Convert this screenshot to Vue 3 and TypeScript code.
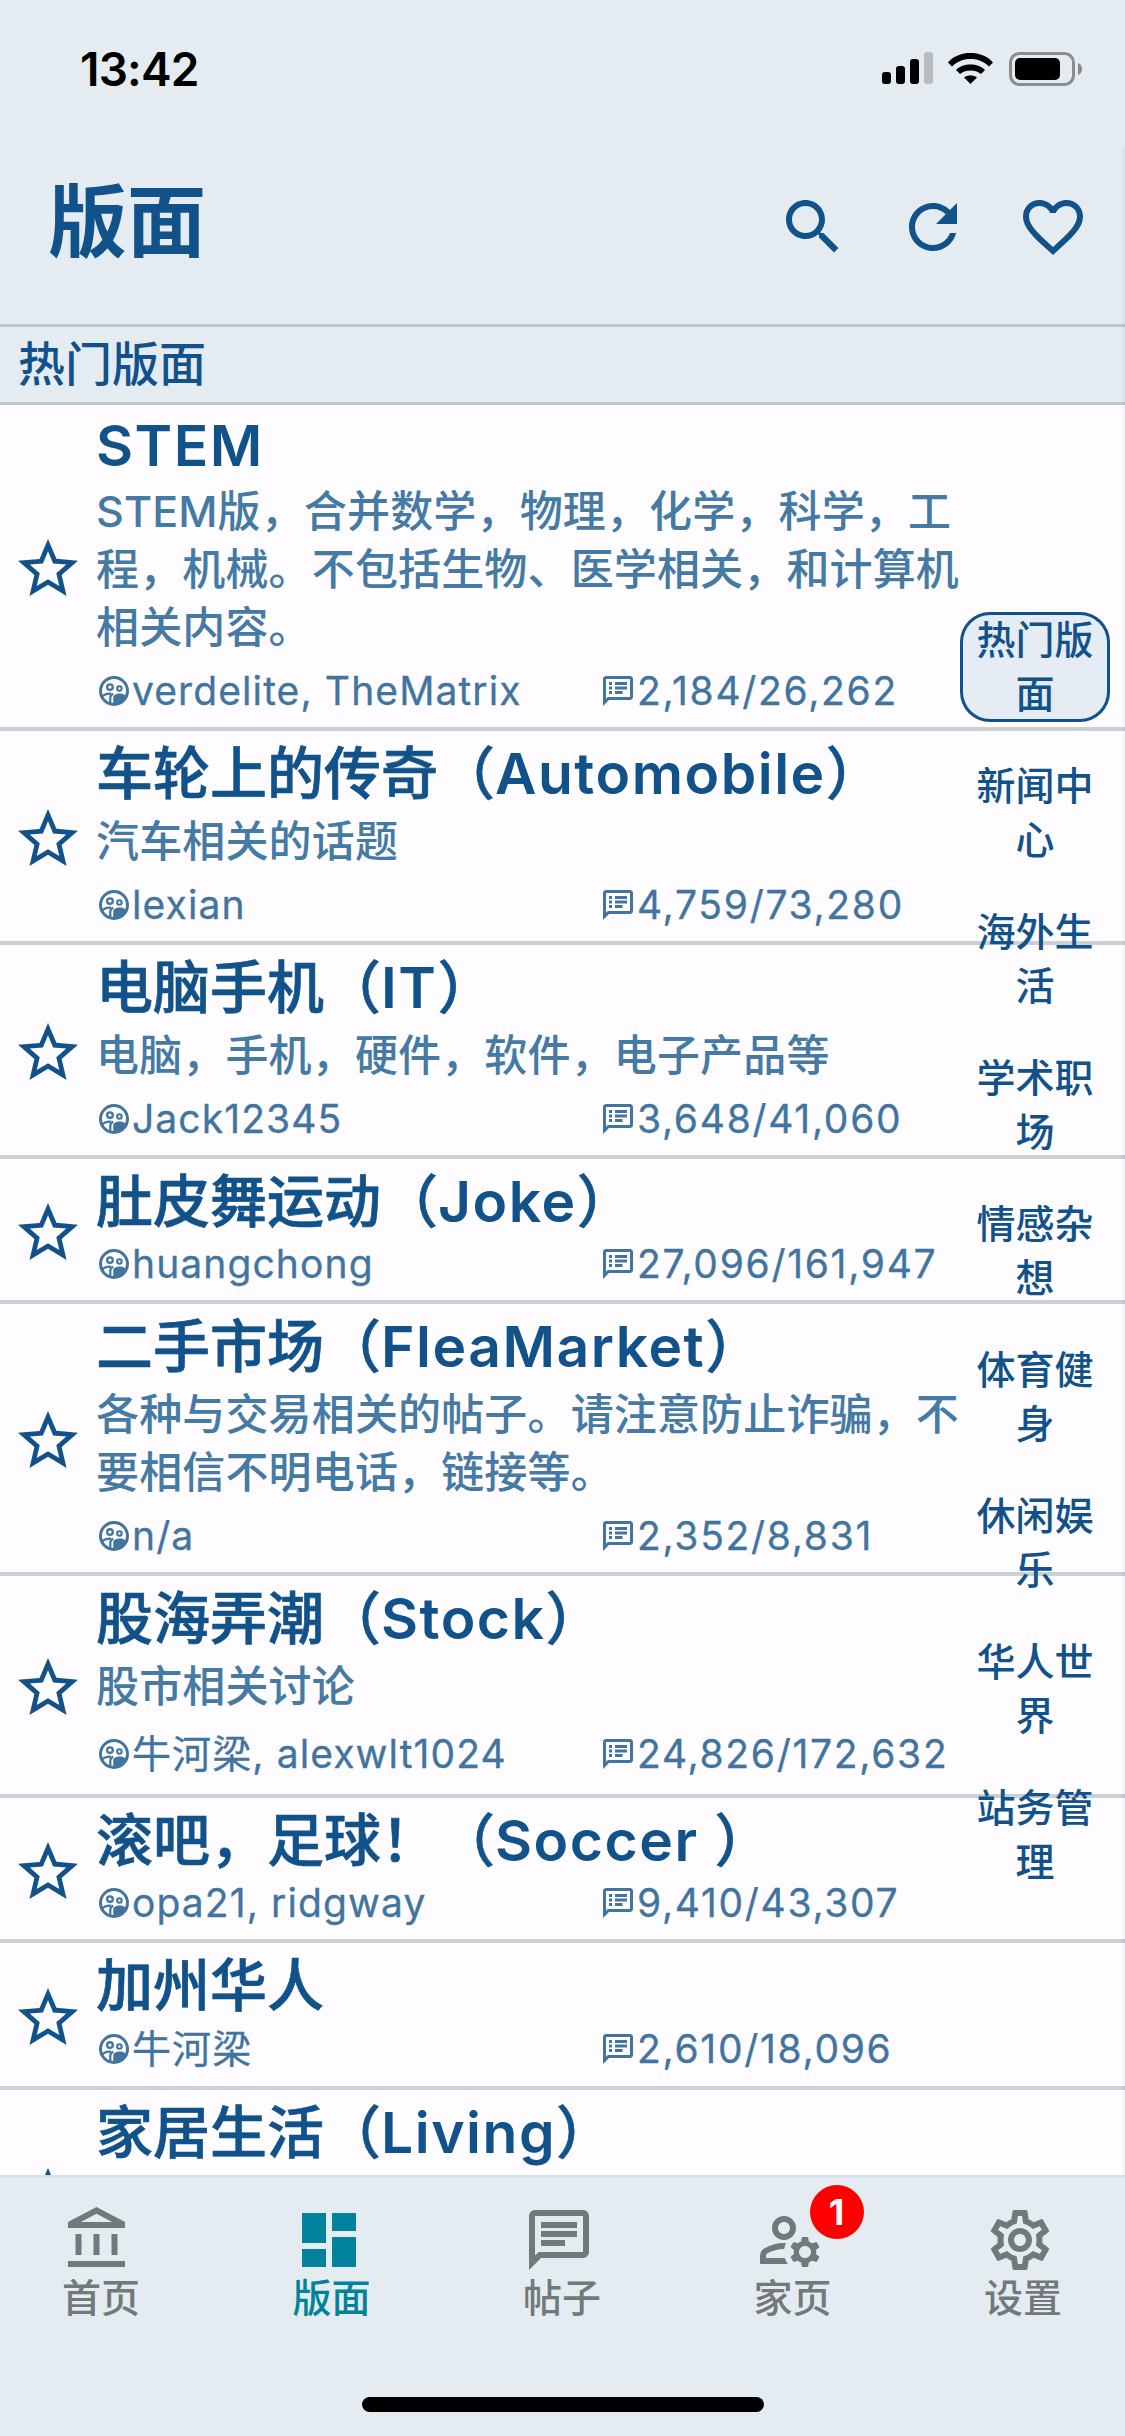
<script setup lang="ts">
interface Board {
  title: string
  desc?: string
  author: string
  stats: string
  latin?: boolean
  cjkAuthor?: boolean
}

interface Segment {
  text: string
  cjk: boolean
}

const boards: Board[] = [
  { title: 'STEM', latin: true, desc: 'STEM版，合并数学，物理，化学，科学，工程，机械。不包括生物、医学相关，和计算机相关内容。', author: 'verdelite, TheMatrix', stats: '2,184/26,262' },
  { title: '车轮上的传奇（Automobile）', desc: '汽车相关的话题', author: 'lexian', stats: '4,759/73,280' },
  { title: '电脑手机（IT）', desc: '电脑，手机，硬件，软件，电子产品等', author: 'Jack12345', stats: '3,648/41,060' },
  { title: '肚皮舞运动（Joke）', author: 'huangchong', stats: '27,096/161,947' },
  { title: '二手市场（FleaMarket）', desc: '各种与交易相关的帖子。请注意防止诈骗，不要相信不明电话，链接等。', author: 'n/a', stats: '2,352/8,831' },
  { title: '股海弄潮（Stock）', desc: '股市相关讨论', author: '牛河梁, alexwlt1024', stats: '24,826/172,632', cjkAuthor: true },
  { title: '滚吧，足球！（Soccer ）', author: 'opa21, ridgway', stats: '9,410/43,307' },
  { title: '加州华人', author: '牛河梁', stats: '2,610/18,096', cjkAuthor: true },
  { title: '家居生活（Living）', desc: '家居生活相关', author: 'n/a', stats: '1,024/9,380' },
]

const categories = ['热门版面', '新闻中心', '海外生活', '学术职场', '情感杂想', '体育健身', '休闲娱乐', '华人世界', '站务管理']

// CJK and Latin runs of a title take different weights
function segments(title: string): Segment[] {
  const runs = title.match(/[\u3000-\u9fff\uff00-\uffef]+|[^\u3000-\u9fff\uff00-\uffef]+/g) ?? []
  return runs.map((text) => ({ text, cjk: /[\u3000-\u9fff\uff00-\uffef]/.test(text) }))
}
</script>

<template>
  <div class="screen">
    <header class="header">
      <div class="status">
        <span class="time">13:42</span>
        <svg class="status-icons" width="200" height="36" viewBox="0 0 200 36">
          <rect x="0" y="20" width="9" height="12" rx="3" fill="#000" />
          <rect x="14" y="14" width="9" height="18" rx="3" fill="#000" />
          <rect x="28" y="7" width="9" height="25" rx="3" fill="#000" />
          <rect x="42" y="0" width="9" height="32" rx="3" fill="#b8bcbf" />
          <path d="M66 10.500C72 3.500 80 1 88.500 1S105 3.500 111 10.500L107 14.500C102 9.500 96 7 88.500 7S75 9.500 70 14.500Z" fill="#000" />
          <path d="M74 18C78 14 83 12.500 88.500 12.500S99 14 103 18L99 22C96 19.500 92.500 18.500 88.500 18.500S81 19.500 78 22Z" fill="#000" />
          <path d="M82 25.500C84 24 86 23.500 88.500 23.500S93 24 95 25.500L88.500 32Z" fill="#000" />
          <rect x="128.500" y="1.500" width="63" height="31" rx="9" fill="none" stroke="#8a8d90" stroke-width="3" />
          <rect x="133" y="6" width="45" height="22" rx="5" fill="#000" />
          <path d="M196 11C198.500 12 200 14 200 17S198.500 22 196 23Z" fill="#85888b" />
        </svg>
      </div>
      <div class="title-row">
        <h1 class="page-title">版面</h1>
        <div class="actions">
          <svg class="icon-72" viewBox="0 0 24 24"><path d="M15.500 14h-.79l-.28-.27C15.410 12.590 16 11.110 16 9.500 16 5.910 13.090 3 9.500 3S3 5.910 3 9.500 5.910 16 9.500 16c1.610 0 3.090-.59 4.230-1.570l.27.28v.79l5 4.990L20.490 19l-4.990-5zm-6 0C7.010 14 5 11.990 5 9.500S7.010 5 9.500 5 14 7.010 14 9.500 11.990 14 9.500 14z" /></svg>
          <svg class="icon-72" viewBox="0 0 24 24"><path d="M17.650 6.350C16.200 4.900 14.210 4 12 4c-4.420 0-7.990 3.580-7.990 8s3.570 8 7.990 8c3.730 0 6.840-2.550 7.730-6h-2.080c-.82 2.330-3.040 4-5.650 4-3.310 0-6-2.690-6-6s2.690-6 6-6c1.660 0 3.140.69 4.220 1.780L13 11h7V4l-2.350 2.350z" /></svg>
          <svg class="icon-72" viewBox="0 0 24 24"><path d="M16.500 3c-1.740 0-3.410.81-4.500 2.090C10.910 3.810 9.240 3 7.500 3 4.420 3 2 5.420 2 8.500c0 3.780 3.400 6.860 8.550 11.540L12 21.350l1.450-1.320C18.600 15.360 22 12.280 22 8.500 22 5.420 19.580 3 16.500 3zm-4.400 15.550l-.1.1-.1-.1C7.140 14.240 4 11.390 4 8.500 4 6.500 5.500 5 7.500 5c1.540 0 3.040.99 3.570 2.360h1.870C13.460 5.990 14.960 5 16.500 5c2 0 3.500 1.500 3.500 3.500 0 2.890-3.140 5.740-7.900 10.050z" /></svg>
        </div>
      </div>
    </header>

    <div class="section">热门版面</div>

    <main class="list">
      <article v-for="b in boards" :key="b.title" class="row">
        <svg class="star" viewBox="0 0 24 24"><path d="M22 9.240l-7.190-.62L12 2 9.190 8.630 2 9.240l5.460 4.730L5.820 21 12 17.270 18.180 21l-1.630-7.030L22 9.240zM12 15.400l-3.760 2.270 1-4.280-3.320-2.880 4.380-.38L12 6.100l1.710 4.040 4.380.38-3.320 2.880 1 4.280L12 15.400z" /></svg>
        <div class="body">
          <div class="title" :class="{ latin: b.latin }">
            <span v-for="s in segments(b.title)" :key="s.text" :class="s.cjk ? 'run-cjk' : 'run-latin'">{{ s.text }}</span>
          </div>
          <div v-if="b.desc" class="desc">{{ b.desc }}</div>
          <div class="meta" :class="{ tall: b.cjkAuthor }">
            <div class="author">
              <svg class="meta-icon" viewBox="0 0 24 24">
                <circle cx="12" cy="12" r="9" fill="none" stroke-width="2" />
                <circle cx="9.300" cy="9.400" r="1.900" fill="none" stroke-width="1.500" />
                <circle cx="15.600" cy="10.300" r="1.500" fill="none" stroke-width="1.400" />
                <path d="M11.500 20.500V16C11.500 14.400 14 13.600 15.600 13.600C17 13.600 18.900 14 20 15C19 18.500 15.500 21 11.500 20.500Z" class="solid" />
                <path d="M4 16C5 14.500 7.500 13.700 10 13.800" fill="none" stroke-width="1.500" />
                <path d="M9.500 20V16.500C9.500 15.500 10 14.500 11.500 13.800" fill="none" stroke-width="1.500" />
              </svg>
              <span class="meta-text">{{ b.author }}</span>
            </div>
            <div class="stats">
              <svg class="meta-icon solid" viewBox="0 0 24 24"><path d="M20 2H4c-1.100 0-2 .9-2 2v18l4-4h14c1.100 0 2-.9 2-2V4c0-1.100-.9-2-2-2zm0 14H5.170L4 17.170V4h16v12zM6 12h2v2H6zm0-3h2v2H6zm0-3h2v2H6zm4 6h5v2h-5zm0-3h8v2h-8zm0-3h8v2h-8z" /></svg>
              <span class="meta-text">{{ b.stats }}</span>
            </div>
          </div>
        </div>
      </article>

      <nav class="index">
        <div v-for="(c, i) in categories" :key="c" class="index-item" :class="{ active: i === 0 }">{{ c }}</div>
      </nav>
    </main>

    <footer class="tabbar">
      <div class="tabs">
        <div class="tab">
          <svg class="tab-icon" viewBox="0 0 24 24"><path d="M6.500 10h-2v7h2v-7zm6 0h-2v7h2v-7zm8.500 9H2v2h19v-2zm-2.500-9h-2v7h2v-7zm-7-6.740L16.710 6H6.290l5.210-2.740m0-2.260L2 6v2h19V6l-9.500-5z" /></svg>
          <span class="tab-label">首页</span>
        </div>
        <div class="tab on">
          <svg class="tab-icon" viewBox="0 0 24 24"><path d="M3 13h8V3H3v10zm0 8h8v-6H3v6zm10 0h8V11h-8v10zm0-18v6h8V3h-8z" /></svg>
          <span class="tab-label">版面</span>
        </div>
        <div class="tab">
          <svg class="tab-icon" viewBox="0 0 24 24"><path d="M20 2H4c-1.100 0-2 .9-2 2v18l4-4h14c1.100 0 2-.9 2-2V4c0-1.100-.9-2-2-2zm0 14H5.170L4 17.170V4h16v12zM6 12h8v2H6zm0-3h12v2H6zm0-3h12v2H6z" /></svg>
          <span class="tab-label">帖子</span>
        </div>
        <div class="tab">
          <div class="badge-wrap">
            <svg class="tab-icon" viewBox="0 0 24 24"><path d="M4 18v-.65c0-.34.16-.66.41-.81C6.100 15.530 8.030 15 10 15c.03 0 .05 0 .08.01.1-.7.3-1.370.59-1.980-.22-.02-.44-.03-.67-.03-2.420 0-4.680.67-6.610 1.820-.88.52-1.390 1.500-1.390 2.530V20h9.260c-.42-.6-.75-1.280-.97-2H4z" /><path d="M10 12c2.210 0 4-1.790 4-4s-1.790-4-4-4-4 1.790-4 4 1.790 4 4 4zm0-6c1.100 0 2 .9 2 2s-.9 2-2 2-2-.9-2-2 .9-2 2-2z" /><path d="M20.750 16c0-.22-.03-.42-.06-.63l1.140-1.010-1-1.730-1.450.49c-.32-.27-.68-.48-1.080-.63L18 11h-2l-.3 1.490c-.4.15-.76.36-1.080.63l-1.450-.49-1 1.730 1.140 1.010c-.03.21-.06.41-.06.63s.03.42.06.63l-1.140 1.010 1 1.730 1.450-.49c.32.27.68.48 1.080.63L16 21h2l.3-1.490c.4-.15.76-.36 1.080-.63l1.450.49 1-1.730-1.140-1.010c.03-.21.06-.41.06-.63zM17 18c-1.100 0-2-.9-2-2s.9-2 2-2 2 .9 2 2-.9 2-2 2z" /></svg>
            <span class="badge">1</span>
          </div>
          <span class="tab-label">家页</span>
        </div>
        <div class="tab">
          <svg class="tab-icon" viewBox="0 0 24 24"><path d="M19.430 12.980c.04-.32.07-.64.07-.98 0-.34-.03-.66-.07-.98l2.110-1.650c.19-.15.24-.42.12-.64l-2-3.460c-.09-.16-.26-.25-.44-.25-.06 0-.12.01-.17.03l-2.490 1c-.52-.4-1.080-.73-1.690-.98l-.38-2.650C14.460 2.180 14.250 2 14 2h-4c-.25 0-.46.18-.49.42l-.38 2.650c-.61.25-1.170.59-1.690.98l-2.490-1c-.06-.02-.12-.03-.18-.03-.17 0-.34.09-.43.25l-2 3.460c-.13.22-.07.49.12.64l2.110 1.650c-.04.32-.07.65-.07.98 0 .33.03.66.07.98l-2.110 1.650c-.19.15-.24.42-.12.64l2 3.460c.09.16.26.25.44.25.06 0 .12-.01.17-.03l2.490-1c.52.4 1.080.73 1.690.98l.38 2.650c.03.24.24.42.49.42h4c.25 0 .46-.18.49-.42l.38-2.650c.61-.25 1.170-.59 1.690-.98l2.490 1c.06.02.12.03.18.03.17 0 .34-.09.43-.25l2-3.460c.12-.22.07-.49-.12-.64l-2.110-1.650zm-1.980-1.710c.04.31.05.52.05.73 0 .21-.02.43-.05.73l-.14 1.130.89.7 1.080.84-.7 1.210-1.270-.51-1.040-.42-.9.68c-.43.32-.84.56-1.250.73l-1.060.43-.16 1.130-.2 1.350h-1.400l-.19-1.350-.16-1.130-1.060-.43c-.43-.18-.83-.41-1.230-.71l-.91-.7-1.060.43-1.270.51-.7-1.210 1.080-.84.89-.7-.14-1.130c-.03-.31-.05-.54-.05-.74s.02-.43.05-.73l.14-1.130-.89-.7-1.080-.84.7-1.210 1.270.51 1.040.42.9-.68c.43-.32.84-.56 1.250-.73l1.060-.43.16-1.130.2-1.350h1.390l.19 1.350.16 1.130 1.060.43c.43.18.83.41 1.230.71l.91.7 1.060-.43 1.270-.51.7 1.210-1.070.85-.89.7.14 1.130zM12 8c-2.210 0-4 1.790-4 4s1.790 4 4 4 4-1.790 4-4-1.790-4-4-4zm0 6c-1.100 0-2-.9-2-2s.9-2 2-2 2 .9 2 2-.9 2-2 2z" /></svg>
          <span class="tab-label">设置</span>
        </div>
      </div>
      <div class="home-indicator"></div>
    </footer>
  </div>
</template>

<style scoped>
.screen {
  position: relative;
  width: 1125px;
  height: 2436px;
  display: flex;
  flex-direction: column;
  overflow: hidden;
  background: #fefcff;
  font-family: Inter, "Noto Sans CJK SC", sans-serif;
}
.screen::after {
  content: "";
  position: absolute;
  top: 147px;
  right: 0;
  width: 3px;
  height: 2029px;
  background: rgba(0, 0, 0, 0.035);
}
.header {
  background: #e4ecf1;
  border-bottom: 3px solid #bfc9cc;
  height: 327px;
  box-sizing: border-box;
  flex: none;
}
.status {
  height: 100px;
  padding: 38px 43px 0 80px;
  box-sizing: border-box;
  display: flex;
  justify-content: space-between;
  align-items: flex-start;
}
.time {
  font-size: 46px;
  font-weight: 600;
  line-height: 62px;
  color: #000;
  letter-spacing: -0.8px;
}
.status-icons {
  margin-top: 14px;
}
.title-row {
  padding: 72px 36px 0 48px;
  display: flex;
  justify-content: space-between;
  align-items: center;
}
.page-title {
  margin: 0 0 10px;
  font-size: 79px;
  font-weight: 700;
  line-height: 100px;
  color: #12528a;
}
.actions {
  display: flex;
  gap: 48px;
}
.icon-72 {
  width: 72px;
  height: 72px;
  fill: #12528a;
}
.section {
  flex: none;
  height: 78px;
  box-sizing: border-box;
  padding-left: 18px;
  background: #e4ecf1;
  border-bottom: 3px solid #bfc9cc;
  font-size: 47px;
  font-weight: 500;
  line-height: 74px;
  color: #12528a;
}
.list {
  flex: 1;
  min-height: 0;
  position: relative;
  overflow: hidden;
}
.row {
  display: flex;
  align-items: center;
  gap: 12px;
  padding-left: 12px;
  border-bottom: 4px solid #c9d1d5;
}
.star {
  flex: none;
  width: 72px;
  height: 72px;
  margin-top: 6px;
  fill: #12528a;
}
.body {
  flex: 1;
  min-width: 0;
}
.title {
  font-size: 57px;
  padding-top: 4px;
  line-height: 77px;
  color: #12528a;
  white-space: nowrap;
}
.title.latin {
  padding-top: 5px;
  line-height: 72px;
}
.run-cjk {
  font-weight: 500;
  -webkit-text-stroke: 0.7px currentColor;
}
.run-latin {
  font-weight: 600;
  letter-spacing: 1.5px;
}
.desc {
  width: 866px;
  font-size: 43px;
  font-weight: 500;
  line-height: 58px;
  letter-spacing: 0.15px;
  color: #447aa3;
  margin-bottom: 11px;
}
.meta {
  display: flex;
  align-items: center;
  padding-bottom: 13px;
  font-size: 39px;
  line-height: 47px;
  color: #41759f;
  -webkit-text-stroke: 0.3px currentColor;
}
.meta.tall {
  line-height: 49px;
}
.desc + .meta.tall {
  line-height: 55px;
}
.author {
  width: 504px;
  flex: none;
  display: flex;
  align-items: center;
  letter-spacing: 1.1px;
}
.stats {
  display: flex;
  align-items: center;
  gap: 1px;
  letter-spacing: 1.7px;
}
.meta-text {
  white-space: nowrap;
}
.meta-icon {
  width: 36px;
  height: 36px;
  flex: none;
  stroke: #41759f;
}
.meta-icon.solid,
.meta-icon .solid {
  fill: #41759f;
  stroke: none;
}
.index {
  position: absolute;
  top: 207px;
  right: 15px;
  width: 150px;
  display: flex;
  flex-direction: column;
  gap: 36px;
}
.index-item {
  height: 110px;
  box-sizing: border-box;
  border-radius: 30px;
  padding: 1px 0 0;
  font-size: 39px;
  font-weight: 500;
  line-height: 54px;
  text-align: center;
  color: #12528a;
}
.index-item.active {
  box-shadow: inset 0 0 0 3px #12528a;
  background: #e6ecf4;
}
.tabbar {
  flex: none;
  height: 261px;
  box-sizing: border-box;
  background: #e4ecf1;
  border-top: 3px solid #d3e2e8;
  position: relative;
  z-index: 1;
  display: flex;
  flex-direction: column;
  align-items: center;
  justify-content: space-between;
  padding: 26px 0 24px;
}
.tabs {
  width: 100%;
  box-sizing: border-box;
  padding: 0 63px 0 62px;
  display: flex;
  justify-content: space-between;
}
.tab {
  width: 78px;
  display: flex;
  flex-direction: column;
  align-items: center;
  color: #72797b;
  fill: #72797b;
}
.tab.on {
  color: #00839b;
  fill: #00839b;
}
.tab-icon {
  width: 72px;
  height: 72px;
  margin-right: 6px;
  display: block;
}
.badge-wrap {
  position: relative;
}
.badge {
  position: absolute;
  left: 56px;
  top: -19px;
  width: 54px;
  height: 54px;
  border-radius: 50%;
  background: #f00;
  color: #fff;
  font-size: 36px;
  font-weight: 700;
  line-height: 54px;
  text-align: center;
}
.tab-label {
  font-size: 39px;
  font-weight: 500;
  line-height: 44px;
  white-space: nowrap;
}
.home-indicator {
  width: 402px;
  height: 15px;
  border-radius: 8px;
  background: #000;
}
</style>

<style>
html, body {
  margin: 0;
  padding: 0;
}
</style>
